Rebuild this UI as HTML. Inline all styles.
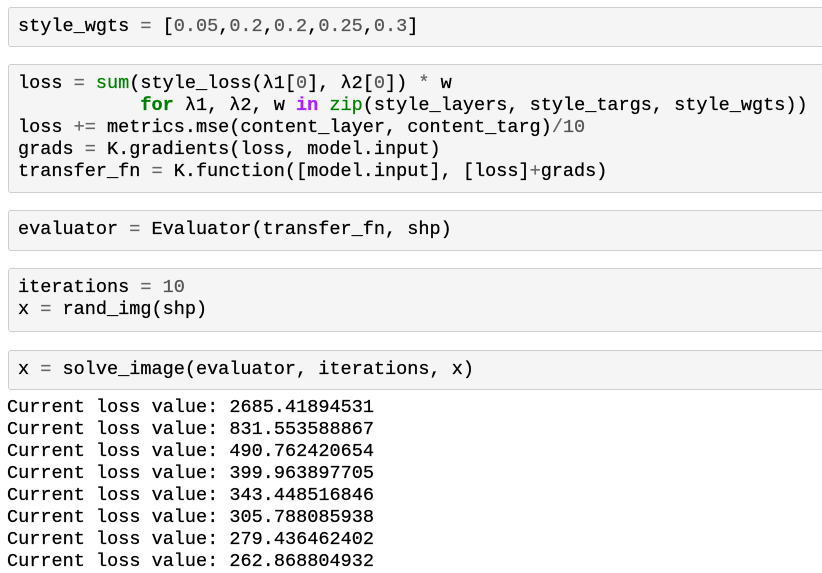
<!DOCTYPE html>
<html><head><style>
body{margin:0;background:#fff;width:822px;height:572px;overflow:hidden;font-family:"Liberation Mono",monospace;font-size:18.55px;-webkit-text-stroke:0.25px;}
.c{position:absolute;left:8px;width:830px;background:#f5f5f5;border:1px solid #cfcfcf;border-radius:3px;box-sizing:border-box;padding:8px 0 0 9px;}
pre{margin:0;font:inherit;line-height:22px;color:#000;}
.o{color:#666}.b{color:#008000}.k{color:#008000;font-weight:bold}.w{color:#aa22ff;font-weight:bold}.n{color:#555}
.out{position:absolute;left:7px;top:397px;}
</style></head><body>
<div class="c" style="top:7px;height:40px"><pre>style_wgts <span class="o">=</span> [<span class="n">0.05</span>,<span class="n">0.2</span>,<span class="n">0.2</span>,<span class="n">0.25</span>,<span class="n">0.3</span>]</pre></div>
<div class="c" style="top:64px;height:129px"><pre>loss <span class="o">=</span> <span class="b">sum</span>(style_loss(λ1[<span class="n">0</span>], λ2[<span class="n">0</span>]) <span class="o">*</span> w
           <span class="k">for</span> λ1, λ2, w <span class="w">in</span> <span class="b">zip</span>(style_layers, style_targs, style_wgts))
loss <span class="o">+=</span> metrics.mse(content_layer, content_targ)<span class="o">/</span><span class="n">10</span>
grads <span class="o">=</span> K.gradients(loss, model.input)
transfer_fn <span class="o">=</span> K.function([model.input], [loss]<span class="o">+</span>grads)</pre></div>
<div class="c" style="top:210px;height:41px"><pre>evaluator <span class="o">=</span> Evaluator(transfer_fn, shp)</pre></div>
<div class="c" style="top:268px;height:64px"><pre>iterations <span class="o">=</span> <span class="n">10</span>
x <span class="o">=</span> rand_img(shp)</pre></div>
<div class="c" style="top:350px;height:40px"><pre>x <span class="o">=</span> solve_image(evaluator, iterations, x)</pre></div>
<pre class="out">Current loss value: 2685.41894531
Current loss value: 831.553588867
Current loss value: 490.762420654
Current loss value: 399.963897705
Current loss value: 343.448516846
Current loss value: 305.788085938
Current loss value: 279.436462402
Current loss value: 262.868804932</pre>
</body></html>
